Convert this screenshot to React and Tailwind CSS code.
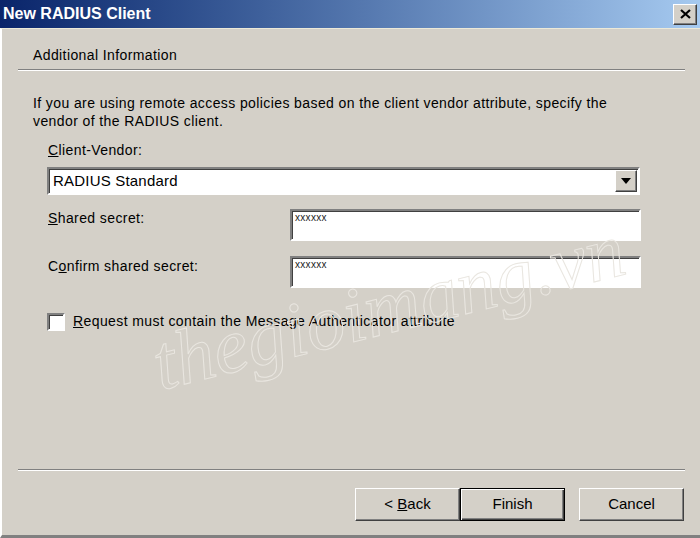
export default function App() {
    const font = { fontFamily: '"Liberation Sans", Arial, sans-serif' };

    return (
        <div
            className="w-[700px] h-[538px] flex flex-col bg-[#d4d0c8] overflow-hidden relative tracking-[0.4px]"
            style={font}
        >
            {/* title bar */}
            <div className="h-[28px] flex items-center justify-between bg-gradient-to-r from-[#0a246a] to-[#a6caf0] pl-[3px] pr-[3px] tracking-normal">
                <span className="text-white font-bold text-[16px] leading-none">
                    New RADIUS Client
                </span>
                <button className="w-[24px] h-[21px] flex items-center justify-center bg-[#d4d0c8] border border-t-white border-l-white border-r-[#404040] border-b-[#404040] shadow-[inset_-1px_-1px_0_#808080]">
                    <svg width="11" height="10" viewBox="0 0 11 10">
                        <path d="M1 1 L10 9 M10 1 L1 9" stroke="#000" strokeWidth="2.2" />
                    </svg>
                </button>
            </div>

            {/* body */}
            <div className="flex-1 flex flex-col border-l-2 border-l-white border-b-[3px] border-b-[#808080] border-t border-t-[#ece9d8]">
                <div className="pl-[31px] pt-[17px] h-[40px] text-[14px] leading-[18px] text-black">
                    Additional Information
                </div>
                <div className="ml-[16px] mr-[15px] h-[2px] border-t border-t-[#808080] border-b border-b-white" />

                <div className="pl-[31px] pr-[10px] pt-[23px] text-[14px] leading-[18px] text-black">
                    If you are using remote access policies based on the client vendor attribute, specify the
                    <br />
                    vendor of the RADIUS client.
                </div>

                <div className="pl-[46px] pt-[12px] text-[14px] leading-[17px] text-black">
                    <span className="underline">C</span>lient-Vendor:
                </div>

                <div className="ml-[45px] mt-[8px] w-[593px] h-[28px] flex items-stretch bg-white border-2 border-t-[#808080] border-l-[#808080] border-b-white border-r-white shadow-[inset_1px_1px_0_#404040]">
                    <div className="flex-1 flex items-center pl-[4px] text-[15px] text-black tracking-[0.2px]">
                        RADIUS Standard
                    </div>
                    <div className="w-[22px] my-[1px] mr-[1px] flex items-center justify-center bg-[#d4d0c8] border border-t-white border-l-white border-r-[#404040] border-b-[#404040] shadow-[inset_-1px_-1px_0_#808080]">
                        <svg width="10" height="6" viewBox="0 0 10 6">
                            <path d="M0 0 H10 L5 6 Z" fill="#000" />
                        </svg>
                    </div>
                </div>

                <SecretRow top="mt-[14px]" />
                <SecretRow top="mt-[15px]" confirm />

                <div className="ml-[45px] mt-[23px] flex items-center gap-[8px] text-[14px] text-black">
                    <div className="w-[18px] h-[18px] bg-white border-2 border-t-[#808080] border-l-[#808080] border-b-white border-r-white shadow-[inset_1px_1px_0_#404040]" />
                    <span>
                        <span className="underline">R</span>equest must contain the Message Authenticator attribute
                    </span>
                </div>

                <div className="flex-1" />

                <div className="ml-[16px] mr-[15px] h-[2px] border-t border-t-[#808080] border-b border-b-white" />

                <div className="flex justify-end pr-[16px] pt-[17px] pb-[14px] tracking-normal">
                    <WinButton>
                        &lt; <span className="underline">B</span>ack
                    </WinButton>
                    <WinButton isDefault>Finish</WinButton>
                    <div className="w-[14px]" />
                    <WinButton>Cancel</WinButton>
                </div>
            </div>

            {/* watermark */}
            <div
                className="absolute left-[154px] top-[306px] text-[78px] italic pointer-events-none text-transparent [-webkit-text-stroke:1px_#e9e6e0] rotate-[-14deg] origin-left whitespace-nowrap tracking-normal"
                style={{ fontFamily: '"Liberation Serif", serif' }}
            >
                thegioimang.vn
            </div>
        </div>
    );
}

function SecretRow({ top, confirm }) {
    return (
        <div className={`${top} flex items-start text-[14px] leading-[17px] text-black`}>
            <div className={`pl-[46px] w-[288px] ${confirm ? "pt-[2px]" : "pt-[1px]"}`}>
                {confirm ? (
                    <>
                        C<span className="underline">o</span>nfirm shared secret:
                    </>
                ) : (
                    <>
                        <span className="underline">S</span>hared secret:
                    </>
                )}
            </div>
            <div className="w-[351px] h-[32px] bg-white border-2 border-t-[#808080] border-l-[#808080] border-b-white border-r-white shadow-[inset_1px_1px_0_#404040] pl-[3px] pt-[1px] text-[10px] leading-[12px] text-[#222] tracking-[0.3px]">
                xxxxxx
            </div>
        </div>
    );
}

function WinButton({ children, isDefault }) {
    return (
        <div
            className={`w-[105px] h-[33px] flex items-center justify-center text-[15px] text-black bg-[#d4d0c8] ${
                isDefault
                    ? "border border-black shadow-[inset_1px_1px_0_#fff,inset_-1px_-1px_0_#404040,inset_-2px_-2px_0_#808080]"
                    : "border border-t-white border-l-white border-r-[#404040] border-b-[#404040] shadow-[inset_-1px_-1px_0_#808080]"
            }`}
        >
            <span>{children}</span>
        </div>
    );
}
